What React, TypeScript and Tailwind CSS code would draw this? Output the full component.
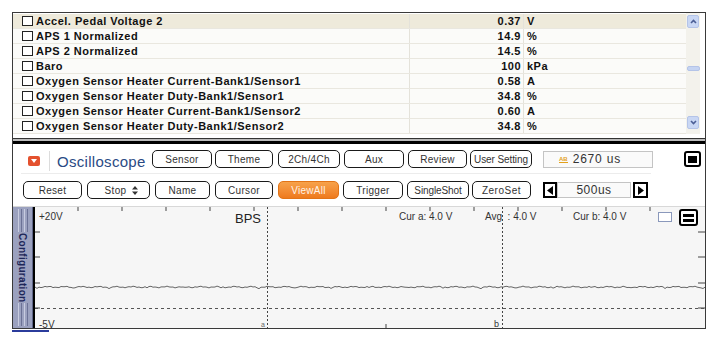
import React from "react"

const rows = [
  ["Accel. Pedal Voltage 2", "0.37", "V"],
  ["APS 1 Normalized", "14.9", "%"],
  ["APS 2 Normalized", "14.5", "%"],
  ["Baro", "100", "kPa"],
  ["Oxygen Sensor Heater Current-Bank1/Sensor1", "0.58", "A"],
  ["Oxygen Sensor Heater Duty-Bank1/Sensor1", "34.8", "%"],
  ["Oxygen Sensor Heater Current-Bank1/Sensor2", "0.60", "A"],
  ["Oxygen Sensor Heater Duty-Bank1/Sensor2", "34.8", "%"],
]

function Btn({ label, className }: { label: React.ReactNode; className: string }) {
  return (
    <div
      className={
        "h-[18px] shrink-0 rounded-[5px] border border-[#1a1a1a] bg-white flex items-center justify-center text-[10px] text-[#333] " +
        className
      }
    >
      {label}
    </div>
  )
}

// noisy trace around the baseline
function signalPath() {
  let d = "M0 80"
  for (let x = 2; x <= 670; x += 2) {
    const n = Math.sin(x * 0.37) * 0.5 + Math.sin(x * 1.13) * 0.4 + (x % 37 < 3 ? 0.8 : 0)
    d += ` L${x} ${(80 + n).toFixed(1)}`
  }
  return d
}

const topTicks = [43, 87, 131, 175, 219, 263, 307, 351, 395, 439, 483, 527, 571, 615]
const sideTicks = [25, 50, 76, 101]

export default function App() {
  return (
    <div className="w-[718px] h-[345px] bg-white pt-[12px] pl-[12px] font-['Liberation_Sans',Arial,sans-serif] overflow-hidden">
      <div className="w-[694px] border-x border-t border-b border-[#3a3a3a]">
        {/* data list */}
        <div className="h-[125px]">
          <div className="h-[121px] flex overflow-hidden">
            <div className="w-[673px] pt-[1px]">
              {rows.map((r, i) => (
                <div
                  key={i}
                  className={
                    "h-[15px] flex border-b border-[#e9e7df] text-[11px] font-bold text-[#111] leading-[15px] tracking-[0.5px] " +
                    (i === 0 ? "bg-[#eeeadb]" : "bg-[#fbfbf9]")
                  }
                >
                  <div className="w-[397px] flex items-center pl-[9px] border-r border-[#e4e2da]">
                    <span className="w-[11px] h-[10px] border border-[#222] bg-white mr-[3px]" />
                    <span>{r[0]}</span>
                  </div>
                  <div className="w-[114px] text-right pr-[2px] border-r border-[#e4e2da]">{r[1]}</div>
                  <div className="pl-[3px]">{r[2]}</div>
                </div>
              ))}
            </div>
            <div className="w-[14px] bg-[#f3f2ec] flex flex-col items-center pt-[2px]">
              <div className="w-[12px] h-[13px] rounded-[2px] border border-[#b4c4e8] bg-[#c9d7f4] flex items-center justify-center">
                <svg width="7" height="5" viewBox="0 0 7 5">
                  <path d="M1 4 L3.5 1.5 L6 4" stroke="#4b5e95" strokeWidth="1.6" fill="none" />
                </svg>
              </div>
              <div className="mt-[38px] w-[13px] h-[5px] rounded-[2px] bg-[#c5d4f2] border border-[#b4c4e8]" />
              <div className="mt-[45px] w-[12px] h-[13px] rounded-[2px] border border-[#b4c4e8] bg-[#c9d7f4] flex items-center justify-center">
                <svg width="7" height="5" viewBox="0 0 7 5">
                  <path d="M1 1 L3.5 3.5 L6 1" stroke="#4b5e95" strokeWidth="1.6" fill="none" />
                </svg>
              </div>
            </div>
          </div>
        </div>
        <div className="h-px bg-[#333]" />
        <div className="h-[2px] bg-[#bbb]" />
        <div className="h-[3px] bg-black" />

        {/* oscilloscope toolbar */}
        <div className="h-[62px] pt-[6px] bg-white">
          <div className="flex items-center h-[18px]">
            <div className="ml-[15px] w-[12px] h-[10px] mt-[4px] rounded-[2px] bg-[#e4512e] flex items-center justify-center">
              <svg width="6" height="4" viewBox="0 0 6 4">
                <path d="M0 0 L6 0 L3 4 Z" fill="white" />
              </svg>
            </div>
            <div className="ml-[9px] w-px h-[20px] mt-[4px] bg-[#dcdcdc]" />
            <div className="ml-[7px] w-[88px] mt-[6px] text-[15px] tracking-[0.3px] text-[#2a4a84]">Oscilloscope</div>
            <Btn label="Sensor" className="ml-[7px] w-[60px] tracking-[0.3px]" />
            <Btn label="Theme" className="ml-[3px] w-[58px] tracking-[0.3px]" />
            <Btn label="2Ch/4Ch" className="ml-[5px] w-[62px] tracking-[0.3px]" />
            <Btn label="Aux" className="ml-[4px] w-[60px] tracking-[0.3px]" />
            <Btn label="Review" className="ml-[4px] w-[59px] tracking-[0.3px]" />
            <Btn label="User Setting" className="ml-[3px] w-[62px] tracking-[-0.1px]" />
            <div className="ml-[11px] w-[110px] h-[17px] border border-[#c4c4c4] bg-[#fafafa] flex items-center pl-[15px] text-[12px] tracking-[0.8px] text-[#333]">
              <span className="text-[6px] leading-[6px] tracking-normal text-[#e3a11c] border-b border-[#e3a11c] mr-[5px] font-bold">AB</span>
              2670 us
            </div>
            <div className="ml-[31px] w-[17px] h-[16px] rounded-[3px] border-2 border-black flex items-center justify-center">
              <div className="w-[9px] h-[7px] bg-black" />
            </div>
          </div>
          <div className="ml-[8px] mt-[5px] w-[630px] h-px bg-[#ececec]" />
          <div className="flex items-center h-[18px] mt-[7px]">
            <Btn label="Reset" className="ml-[10px] w-[59px] tracking-[0.3px]" />
            <Btn
              label={
                <span className="flex items-center gap-[6px] pl-[6px] tracking-[0.3px]">
                  Stop
                  <svg width="6" height="9" viewBox="0 0 6 9">
                    <path d="M0 3.5 L3 0 L6 3.5 Z M0 5.5 L3 9 L6 5.5 Z" fill="#333" />
                  </svg>
                </span>
              }
              className="ml-[5px] w-[63px]"
            />
            <Btn label="Name" className="ml-[5px] w-[55px] tracking-[0.3px]" />
            <Btn label="Cursor" className="ml-[5px] w-[58px] tracking-[0.3px]" />
            <div className="ml-[5px] w-[61px] h-[18px] rounded-[5px] border border-[#e27417] bg-gradient-to-b from-[#f7a24a] to-[#ee7a1c] flex items-center justify-center text-[10px] tracking-[0.3px] text-[#fff3e6]">
              ViewAll
            </div>
            <Btn label="Trigger" className="ml-[4px] w-[60px] tracking-[0.3px]" />
            <Btn label="SingleShot" className="ml-[4px] w-[62px] tracking-[-0.1px]" />
            <Btn label="ZeroSet" className="ml-[3px] w-[59px] tracking-[0.5px]" />
            <div className="ml-[12px] w-[14px] h-[16px] border-2 border-black flex items-center justify-center">
              <svg width="6" height="9" viewBox="0 0 6 9">
                <path d="M6 0 L0 4.5 L6 9 Z" fill="black" />
              </svg>
            </div>
            <div className="w-[74px] h-[16px] border border-[#c4c4c4] bg-[#fafafa] flex items-center justify-center text-[12px] tracking-[0.5px] text-[#333]">
              500us
            </div>
            <div className="ml-[2px] w-[15px] h-[16px] border-2 border-black flex items-center justify-center">
              <svg width="6" height="9" viewBox="0 0 6 9">
                <path d="M0 0 L6 4.5 L0 9 Z" fill="black" />
              </svg>
            </div>
          </div>
        </div>

        {/* graph */}
        <div className="h-[122px] flex border-t border-[#d8d8d8]">
          <div className="w-[20px] bg-[#9ba1bf] border-r border-[#5f6689] flex flex-col items-center py-[2px]">
            <div className="h-[23px] w-[12px] flex justify-center gap-[2px]">
              <div className="w-px h-full bg-[#c8cce0]" />
              <div className="w-px h-full bg-[#6c7296]" />
              <div className="w-px h-full bg-[#c8cce0]" />
              <div className="w-px h-full bg-[#6c7296]" />
            </div>
            <div className="flex-1 flex items-center justify-center [writing-mode:vertical-rl] text-[10px] font-bold text-[#1d2658] tracking-[0.3px]">
              Configuration
            </div>
            <div className="h-[23px] w-[12px] flex justify-center gap-[2px]">
              <div className="w-px h-full bg-[#c8cce0]" />
              <div className="w-px h-full bg-[#6c7296]" />
              <div className="w-px h-full bg-[#c8cce0]" />
              <div className="w-px h-full bg-[#6c7296]" />
            </div>
          </div>
          <div className="w-[2px] bg-black" />
          <div className="relative flex-1 bg-[#f6f6f6] text-[10px] text-[#333]">
            <svg className="absolute inset-0" width="670" height="121" viewBox="0 0 670 121">
              {topTicks.map((x) => (
                <line key={x} x1={x} y1={0} x2={x} y2={4} stroke="#444" strokeWidth="1" />
              ))}
              {sideTicks.map((y) => (
                <g key={y}>
                  <line x1={0} y1={y} x2={5} y2={y} stroke="#444" strokeWidth="1" />
                  <line x1={663} y1={y} x2={670} y2={y} stroke="#444" strokeWidth="1" />
                </g>
              ))}
              <line x1={351} y1={117} x2={351} y2={121} stroke="#444" strokeWidth="1" />
              <line x1={0} y1={101.5} x2={670} y2={101.5} stroke="#555" strokeWidth="1" strokeDasharray="3 3" />
              <line x1={232.5} y1={0} x2={232.5} y2={121} stroke="#444" strokeWidth="1" strokeDasharray="2 2" />
              <line x1={467.5} y1={0} x2={467.5} y2={121} stroke="#444" strokeWidth="1" strokeDasharray="2 2" />
              <path d={signalPath()} stroke="#555" strokeWidth="0.9" fill="none" />
            </svg>
            <span className="absolute left-[4px] top-[2px]">+20V</span>
            <span className="absolute left-[200px] top-[2px] text-[13px] text-[#222]">BPS</span>
            <span className="absolute left-[364px] top-[2px]">Cur a: 4.0 V</span>
            <span className="absolute left-[450px] top-[2px]">Avg&nbsp;&nbsp;: 4.0 V</span>
            <span className="absolute left-[538px] top-[2px]">Cur b: 4.0 V</span>
            <div className="absolute left-[623px] top-[5px] w-[14px] h-[10px] border border-[#8a98bb] bg-white" />
            <div className="absolute left-[644px] top-[2px] w-[19px] h-[17px] rounded-[3px] border-2 border-black bg-white flex flex-col justify-center gap-[2px] px-[2px]">
              <div className="h-[3px] bg-black" />
              <div className="h-[3px] bg-black" />
            </div>
            <span className="absolute left-[4px] top-[110px]">-5V</span>
            <span className="absolute left-[226px] top-[113px] text-[7px] text-[#666]">a</span>
            <span className="absolute left-[459px] top-[111px] text-[9px]">b</span>
          </div>
        </div>
      </div>
      <div className="w-[37px] h-[2px] mt-px bg-[#2b3c9c]" />
    </div>
  )
}
